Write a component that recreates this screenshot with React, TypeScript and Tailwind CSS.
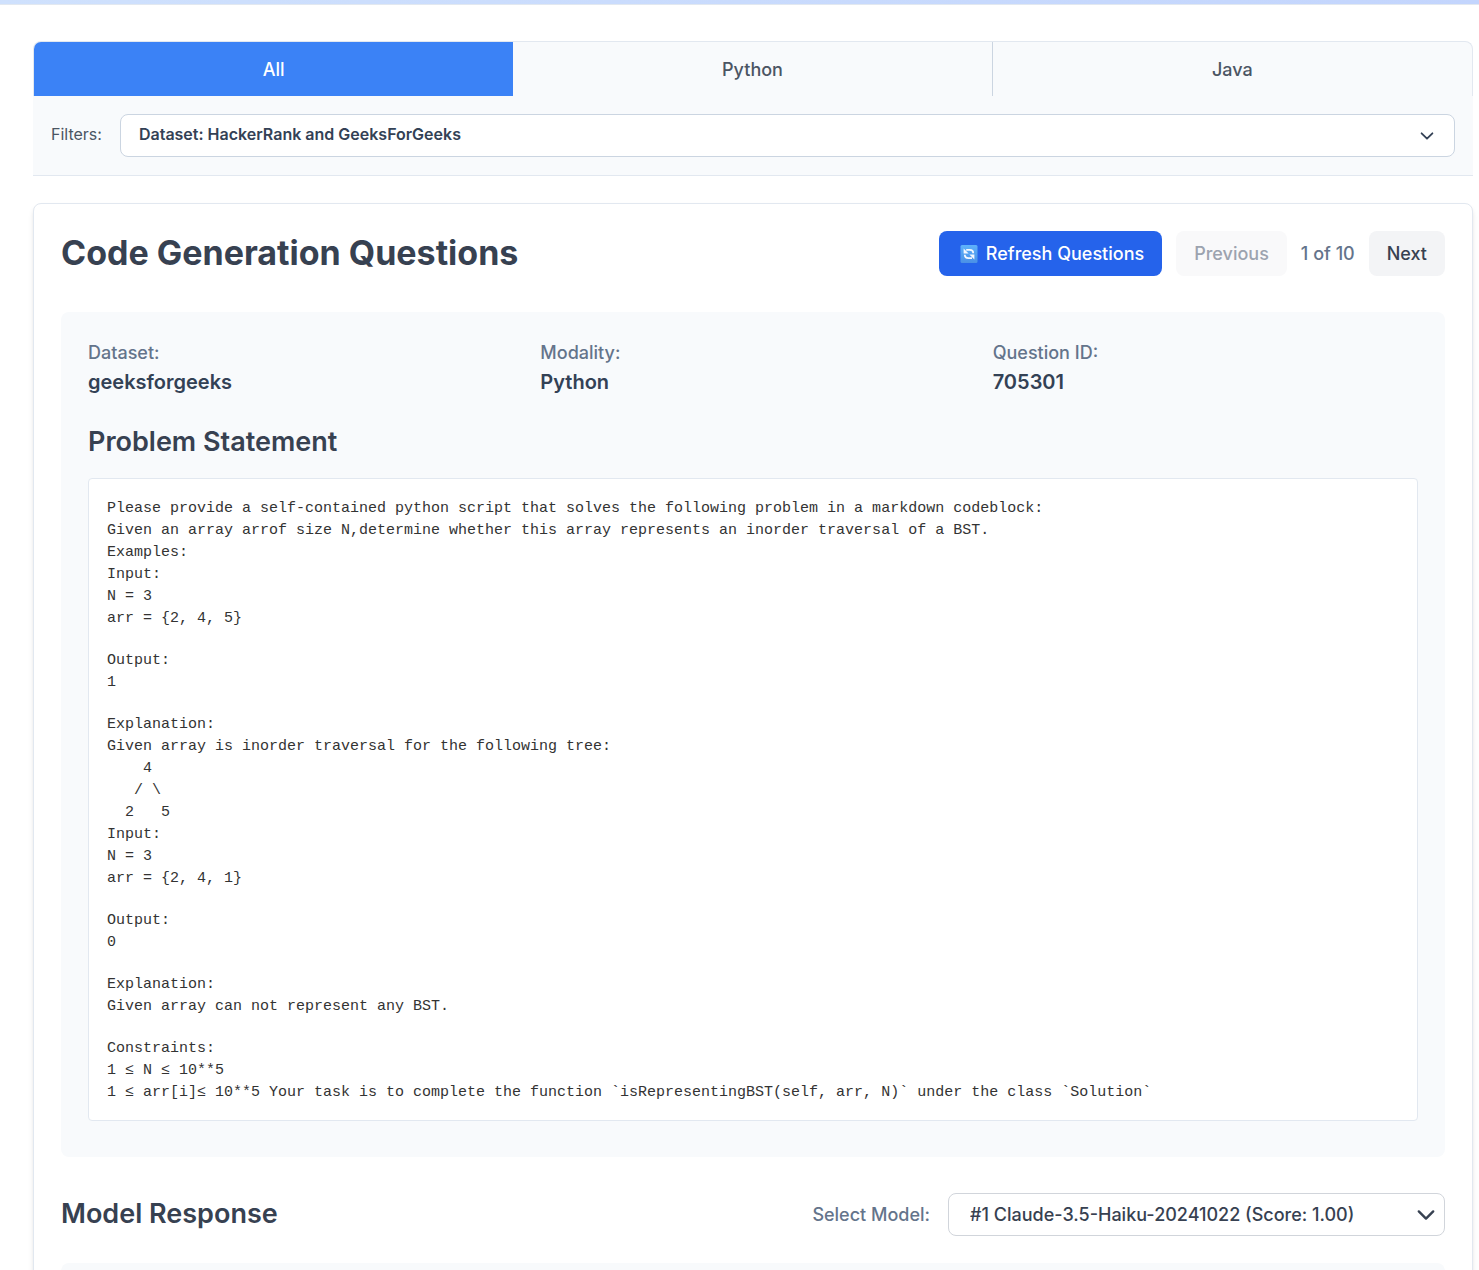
import { useState } from "react";

const TABS = ["All", "Python", "Java"];

const META = [
  { label: "Dataset:", value: "geeksforgeeks" },
  { label: "Modality:", value: "Python" },
  { label: "Question ID:", value: "705301" },
];

const STATEMENT = [
  `Please provide a self-contained python script that solves the following problem in a markdown codeblock:
Given an array arrof size N,determine whether this array represents an inorder traversal of a BST.
Examples:
Input:
N = 3
arr = {2, 4, 5}`,
  `Output:
1`,
  `Explanation:
Given array is inorder traversal for the following tree:
    4
   / \\
  2   5
Input:
N = 3
arr = {2, 4, 1}`,
  `Output:
0`,
  `Explanation:
Given array can not represent any BST.`,
  `Constraints:
1 ≤ N ≤ 10**5
1 ≤ arr[i]≤ 10**5 Your task is to complete the function \`isRepresentingBST(self, arr, N)\` under the class \`Solution\``,
];

function RefreshIcon() {
  return (
    <svg viewBox="0 0 18 18" className="size-[18px]" aria-hidden="true">
      <defs>
        <linearGradient id="refresh-tile" x1="0" y1="0" x2="0" y2="1">
          <stop offset="0" stopColor="#5fb2fb" />
          <stop offset="1" stopColor="#4a90e6" />
        </linearGradient>
      </defs>
      <rect x="0.5" y="0" width="17" height="18" rx="1.5" fill="url(#refresh-tile)" />
      <g fill="none" stroke="#f4f8ff" strokeWidth="1.8">
        <path d="M6.2 4.9H9.6c2.4 0 3.6 1.2 3.6 3.3" />
        <path d="M12 13.1H8.4c-2.4 0-3.6-1.2-3.6-3.3" />
      </g>
      <path d="M3.6 3.4v5h5z" fill="#f4f8ff" />
      <path d="M14.4 14.6v-5h-5z" fill="#f4f8ff" />
    </svg>
  );
}

function Chevron({ className }: { className: string }) {
  return (
    <svg viewBox="0 0 20 20" className={className} fill="none" stroke="currentColor" aria-hidden="true">
      <path d="M4 7l6 6 6-6" strokeWidth="2" strokeLinecap="round" strokeLinejoin="round" />
    </svg>
  );
}

function Tabs() {
  const [active, setActive] = useState("All");
  return (
    <div
      role="tablist"
      className="grid grid-cols-3 overflow-hidden rounded-t-lg border border-b-0 border-[#e2e8f0] bg-[#f8fafc] text-lg font-medium"
    >
      {TABS.map((tab) => (
        <button
          key={tab}
          type="button"
          role="tab"
          aria-selected={tab === active}
          onClick={() => setActive(tab)}
          className={
            tab === active
              ? "h-[54px] bg-[#3b82f6] pt-0.5 text-white"
              : "h-[54px] border-[#cbd5e1] pt-0.5 text-[#4b5563] not-last:border-r"
          }
        >
          {tab}
        </button>
      ))}
    </div>
  );
}

function Filters() {
  return (
    <div className="flex items-center gap-[18px] border-b border-[#e2e8f0] bg-[#f8fafc] p-[18px] text-base">
      <span id="filters-label" className="pb-1 text-[#4b5563]">
        Filters:
      </span>
      <button
        type="button"
        aria-labelledby="filters-label filters-value"
        aria-haspopup="listbox"
        className="flex h-[43px] flex-1 items-center justify-between rounded-lg border border-[#cbd5e1] bg-white px-[18px] font-semibold text-[#334155]"
      >
        <span id="filters-value" className="pb-1">
          Dataset: HackerRank and GeeksForGeeks
        </span>
        <Chevron className="size-[18px]" />
      </button>
    </div>
  );
}

function CardHeader() {
  return (
    <header className="flex items-start justify-between">
      <h1 className="text-[34px] leading-[43px] font-bold text-[#374151]">Code Generation Questions</h1>
      <div className="flex items-center gap-[14px] text-lg font-medium">
        <button
          type="button"
          className="flex h-[45px] items-center gap-2 rounded-lg bg-[#2563eb] pr-[18px] pl-[21px] text-white"
        >
          <RefreshIcon />
          Refresh Questions
        </button>
        <button type="button" disabled className="h-[45px] rounded-lg bg-[#f9f9fa] px-[18px] text-[#9ca3af]">
          Previous
        </button>
        <span className="text-[#64748b]">1 of 10</span>
        <button type="button" className="h-[45px] rounded-lg bg-[#f3f4f6] px-[18px] text-[#374151]">
          Next
        </button>
      </div>
    </header>
  );
}

function Question() {
  return (
    <section className="mt-9 rounded-lg bg-[#f8fafc] px-[27px] pt-[27px] pb-9">
      <dl className="grid grid-cols-3 gap-[27px]">
        {META.map((item) => (
          <div key={item.label}>
            <dt className="text-lg leading-[27px] font-medium text-[#64748b]">{item.label}</dt>
            <dd className="text-xl leading-8 font-semibold text-[#334155]">{item.value}</dd>
          </div>
        ))}
      </dl>
      <h2 className="mt-[26px] text-[27px] leading-9 font-semibold text-[#374151]">Problem Statement</h2>
      <div className="mt-[18px] flex flex-col gap-5 rounded-sm border border-[#e2e8f0] bg-white px-[18px] pt-[19px] pb-4">
        {STATEMENT.map((block, index) => (
          <pre
            key={index}
            className="font-['Liberation_Mono',monospace] text-[15px] leading-[22px] text-[#333333]"
          >
            {block}
          </pre>
        ))}
      </div>
    </section>
  );
}

function ModelResponse() {
  return (
    <section className="mt-9">
      <div className="flex items-start justify-between">
        <h2 className="text-[27px] leading-[41px] font-semibold text-[#374151]">Model Response</h2>
        <div className="flex items-center gap-[18px] text-lg font-medium">
          <label htmlFor="model" className="text-[#64748b]">
            Select Model:
          </label>
          <div className="relative">
            <select
              id="model"
              className="h-[43px] w-[497px] appearance-none rounded-lg border border-[#d1d5db] bg-white pr-10 pl-[21px] text-[#374151]"
            >
              <option>#1 Claude-3.5-Haiku-20241022 (Score: 1.00)</option>
            </select>
            <Chevron className="pointer-events-none absolute top-[10px] right-[7px] size-6 text-[#374151]" />
          </div>
        </div>
      </div>
      <div className="mt-[27px] h-40 rounded-lg bg-[#f8fafc]" />
    </section>
  );
}

export default function App() {
  return (
    <div className="h-screen overflow-hidden bg-white font-['Inter',sans-serif]">
      <div className="h-[5px] border-b border-[#e2e8f0] bg-linear-to-r from-[#cfe1fd] to-[#c3d5fd]" />
      <main className="pt-9 pr-[6px] pl-[33px]">
        <Tabs />
        <Filters />
        <div className="mt-[27px] rounded-lg border border-[#e2e8f0] bg-white p-[27px] shadow-md">
          <CardHeader />
          <Question />
          <ModelResponse />
        </div>
      </main>
    </div>
  );
}
